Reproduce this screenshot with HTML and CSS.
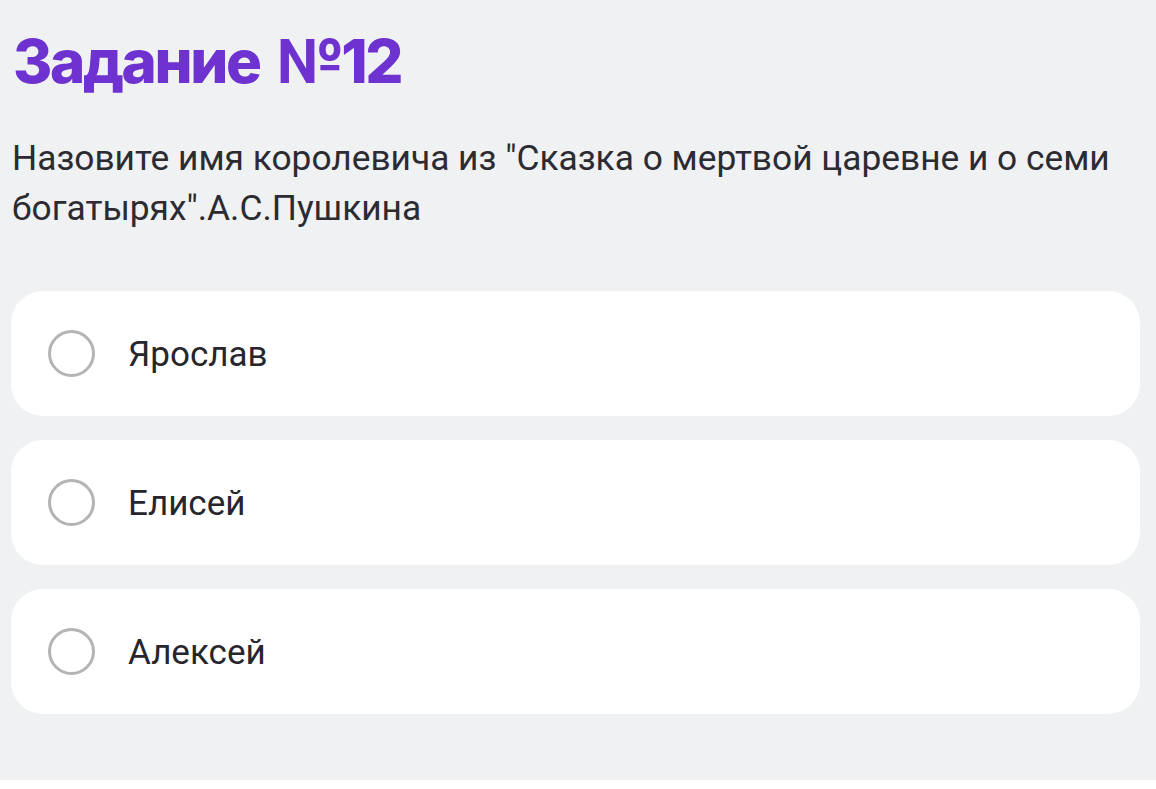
FILE: index.html
```html
<!DOCTYPE html>
<html lang="ru">
<head>
<meta charset="utf-8">
<title>Задание №12</title>
<link rel="stylesheet" href="styles.css">
</head>
<body>
<main class="task">
  <h1 class="task-title">Задание №12</h1>
  <p class="task-question">Назовите имя королевича из "Сказка о мертвой царевне и о семи богатырях".А.С.Пушкина</p>
  <div class="options">
    <label class="option"><span class="radio"></span><span class="option-text">Ярослав</span></label>
    <label class="option"><span class="radio"></span><span class="option-text">Елисей</span></label>
    <label class="option"><span class="radio"></span><span class="option-text">Алексей</span></label>
  </div>
</main>
</body>
</html>
```
FILE: styles.css
```css
html, body {
  margin: 0;
  padding: 0;
  background: #ffffff;
}

.task {
  box-sizing: border-box;
  height: 780px;
  background: #f0f1f3;
  padding: 23px 16px 0 11px;
  font-family: Roboto, "Noto Sans", sans-serif;
}

.task-title {
  margin: 0 0 0 2px;
  font-family: Inter, sans-serif;
  font-weight: 800;
  font-size: 60px;
  line-height: 76px;
  color: #6d32cf;
  letter-spacing: -2.4px;
  word-spacing: 7px;
}

.task-question {
  margin: 34px 30px 0 1px;
  font-size: 35.3px;
  line-height: 50px;
  color: #2b2b31;
}

.options {
  margin-top: 58px;
  display: flex;
  flex-direction: column;
  gap: 24px;
}

.option {
  display: flex;
  align-items: center;
  height: 125px;
  background: #ffffff;
  border-radius: 32px;
  padding-left: 37px;
  gap: 33px;
}

.radio {
  box-sizing: border-box;
  width: 47px;
  height: 47px;
  border: 3px solid #b4b4b6;
  border-radius: 50%;
  flex: none;
}

.option-text {
  font-size: 35px;
  color: #26262c;
  margin-top: 2px;
}
```
